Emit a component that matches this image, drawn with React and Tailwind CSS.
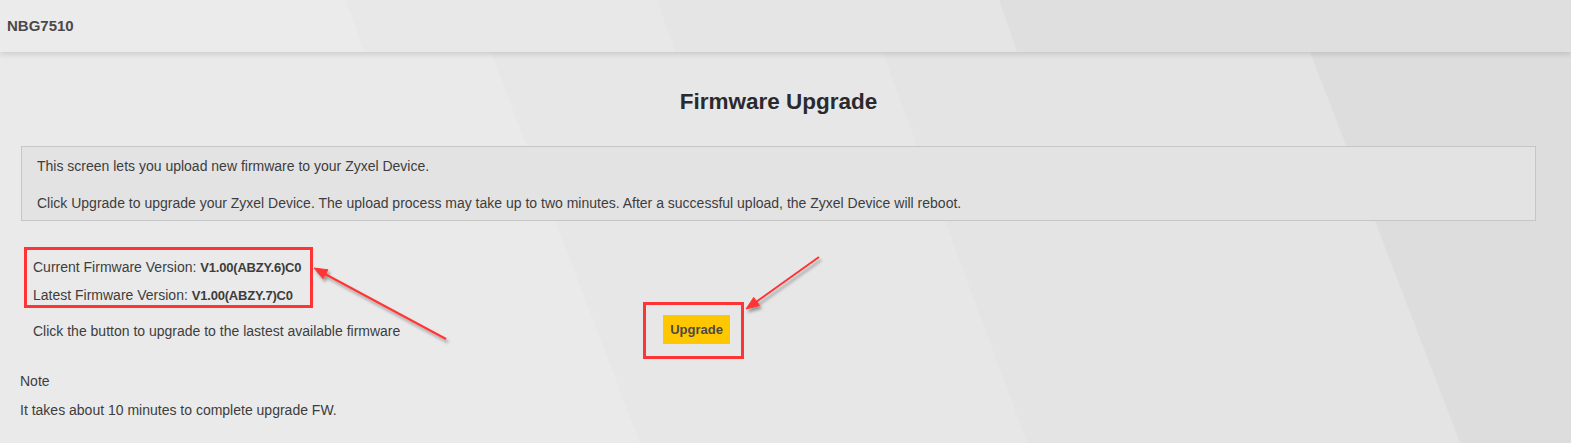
import React from "react";

const Arrows = () => (
  <svg
    className="pointer-events-none absolute inset-0 z-20"
    width="1571"
    height="443"
    viewBox="0 0 1571 443"
  >
    <defs>
      <filter id="arrowShadow" x="-20%" y="-20%" width="140%" height="140%">
        <feDropShadow dx="2" dy="3" stdDeviation="1.5" floodColor="#000" floodOpacity="0.35" />
      </filter>
    </defs>
    <g filter="url(#arrowShadow)" fill="#ff3535" stroke="#ff3535">
      {/* arrow to firmware versions */}
      <line x1="446" y1="339" x2="325" y2="274" strokeWidth="2" />
      <polygon points="314,268 328,269.8 323,278.6" strokeWidth="1" />
      {/* arrow to upgrade button */}
      <line x1="819" y1="257" x2="756" y2="302" strokeWidth="2" />
      <polygon points="746,309 759.5,305.5 753.7,297.4" strokeWidth="1" />
    </g>
  </svg>
);

export default function App() {
  return (
    <div className="relative h-[443px] w-full overflow-hidden bg-[#eaeaea] font-['Liberation_Sans',Arial,sans-serif] text-[#3d3d3d]">
      {/* page background stripes */}
      <svg className="absolute inset-0" width="1571" height="443" viewBox="0 0 1571 443">
        <polygon points="471,0 863,0 1027,443 640,443" fill="#e7e7e7" />
        <polygon points="863,0 1290,0 1460,443 1027,443" fill="#e4e4e4" />
        <polygon points="1290,0 1571,0 1571,443 1460,443" fill="#dddddd" />
      </svg>

      {/* Header */}
      <header className="relative z-10 flex h-[52px] items-center bg-[#ebebeb] px-[7px] shadow-[0_2px_6px_rgba(0,0,0,0.14)]">
        <svg className="absolute inset-0" width="1571" height="52" viewBox="0 0 1571 52">
          <polygon points="346,0 657,0 675,52 364,52" fill="#e8e8e8" />
          <polygon points="657,0 999,0 1017,52 675,52" fill="#e5e5e5" />
          <polygon points="999,0 1571,0 1571,52 1017,52" fill="#dfdfdf" />
        </svg>
        <span className="relative text-[15px] font-bold text-[#4a4a4a]">NBG7510</span>
      </header>

      {/* Main */}
      <main className="relative pl-[21px] pr-[35px] text-[14px] leading-[20px]">
        <h1 className="mt-[36px] text-center text-[22.5px] font-bold leading-[28px] text-[#2a2a2e]">
          Firmware Upgrade
        </h1>

        <div className="mt-[30px] border border-[#c6c6c6] bg-[#e3e3e3] px-[15px] pt-[9px] pb-[7px]">
          <p>This screen lets you upload new firmware to your Zyxel Device.</p>
          <p className="mt-[17px]">
            Click Upgrade to upgrade your Zyxel Device. The upload process may take up to two minutes. After a
            successful upload, the Zyxel Device will reboot.
          </p>
        </div>

        <div className="mt-[26px] ml-[3px] flex w-[289px] flex-col gap-[8px] whitespace-nowrap border-[3px] border-[#ff3535] pl-[6px] pt-[7px]">
          <p className="h-[20px]">
            Current Firmware Version:{" "}
            <span className="text-[13px] font-bold leading-none tracking-[-0.2px]">V1.00(ABZY.6)C0</span>
          </p>
          <p className="h-[20px]">
            Latest Firmware Version:{" "}
            <span className="text-[13px] font-bold leading-none tracking-[-0.2px]">V1.00(ABZY.7)C0</span>
          </p>
        </div>

        <div className="mt-[-6px] flex items-center">
          <span className="w-[622px] pl-[12px]">Click the button to upgrade to the lastest available firmware</span>
          <div className="border-[3px] border-[#ff3535] pt-[10px] pr-[11px] pb-[12px] pl-[17px]">
            <button className="flex h-[29px] w-[67px] items-center justify-center bg-[#ffc700] text-[13px] font-bold text-[#4a4a4a]">
              Upgrade
            </button>
          </div>
        </div>

        <p className="mt-[12px] ml-[-1px]">Note</p>
        <p className="mt-[9px] ml-[-1px]">It takes about 10 minutes to complete upgrade FW.</p>
      </main>

      <Arrows />
    </div>
  );
}
